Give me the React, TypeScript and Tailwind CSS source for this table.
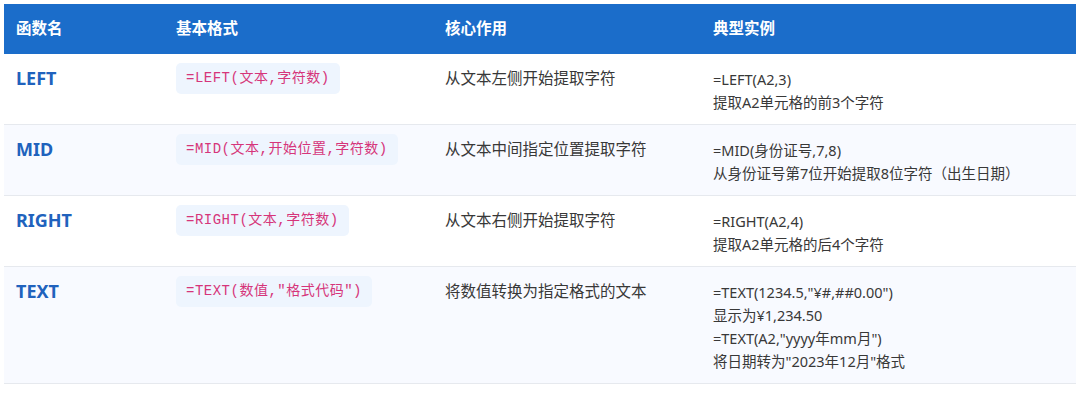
import React from "react";

type Row = {
  name: string;
  syntax: string;
  purpose: string;
  examples: string[];
  shaded: boolean;
};

const rows: Row[] = [
  {
    name: "LEFT",
    syntax: "=LEFT(文本,字符数)",
    purpose: "从文本左侧开始提取字符",
    examples: ["=LEFT(A2,3)", "提取A2单元格的前3个字符"],
    shaded: false,
  },
  {
    name: "MID",
    syntax: "=MID(文本,开始位置,字符数)",
    purpose: "从文本中间指定位置提取字符",
    examples: ["=MID(身份证号,7,8)", "从身份证号第7位开始提取8位字符（出生日期）"],
    shaded: true,
  },
  {
    name: "RIGHT",
    syntax: "=RIGHT(文本,字符数)",
    purpose: "从文本右侧开始提取字符",
    examples: ["=RIGHT(A2,4)", "提取A2单元格的后4个字符"],
    shaded: false,
  },
  {
    name: "TEXT",
    syntax: '=TEXT(数值,"格式代码")',
    purpose: "将数值转换为指定格式的文本",
    examples: [
      '=TEXT(1234.5,"¥#,##0.00")',
      "显示为¥1,234.50",
      '=TEXT(A2,"yyyy年mm月")',
      '将日期转为"2023年12月"格式',
    ],
    shaded: true,
  },
];

const sans = "font-['Noto_Sans','Noto_Sans_CJK_SC',sans-serif]";

export default function App() {
  return (
    <div className={`w-[1080px] h-[412px] bg-white pt-1 px-1 ${sans}`}>
      {/* Header */}
      <div className="grid grid-cols-[160px_269px_268px_375px] h-[50px] bg-[#1b6dca] text-white text-[15.5px] font-bold">
        <div className="pl-3 flex items-center">函数名</div>
        <div className="pl-3 flex items-center">基本格式</div>
        <div className="pl-3 flex items-center">核心作用</div>
        <div className="pl-3 flex items-center">典型实例</div>
      </div>

      {/* Rows */}
      {rows.map((row) => (
        <div
          key={row.name}
          className={`grid grid-cols-[160px_269px_268px_375px] border-b border-[#e6e9ee] ${
            row.shaded ? "bg-[#f8faff]" : "bg-white"
          }`}
        >
          <div className="pl-3 pt-[13px] pb-[11px] text-[18px] leading-[23px] font-bold text-[#2062bd]">
            {row.name}
          </div>
          <div className="pl-3 pt-[9px]">
            <span className="inline-block rounded-[5px] bg-[#eef5fe] px-[10px] py-[6px] text-[14px] leading-[19px] tracking-[0.5px] text-[#d6357a] font-['Liberation_Mono','Noto_Sans_CJK_SC',monospace]">
              {row.syntax}
            </span>
          </div>
          <div className="pl-3 pt-[13px] text-[15.5px] leading-[23px] text-[#383838]">{row.purpose}</div>
          <div className="pl-3 pt-[14px] pb-[10px] text-[14.5px] leading-[23px] text-[#383838]">
            {row.examples.map((line) => (
              <div key={line}>{line}</div>
            ))}
          </div>
        </div>
      ))}
    </div>
  );
}
